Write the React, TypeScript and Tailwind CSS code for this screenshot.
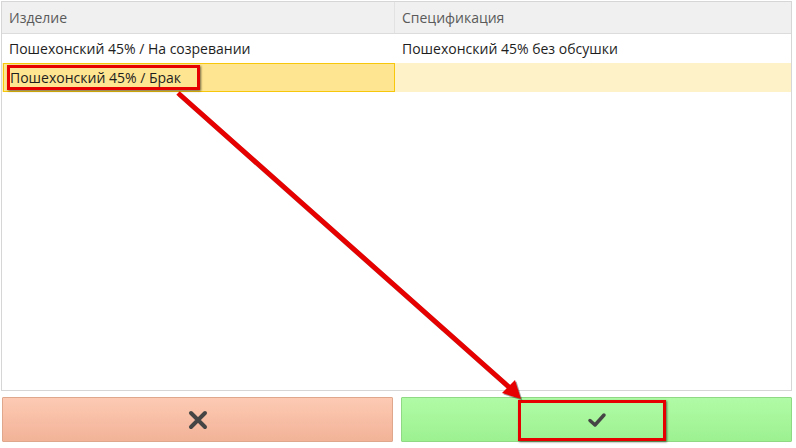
import React from "react";

const rows = [
  { product: "Пошехонский 45% / На созревании", spec: "Пошехонский 45% без обсушки" },
  { product: "Пошехонский 45% / Брак", spec: "" },
];

export default function App() {
  return (
    <div className="relative w-[796px] h-[448px] bg-white font-['Open_Sans',sans-serif] text-[14px] flex flex-col">
      <div className="ml-[1px] mt-[1px] w-[791px] h-[390px] border border-[#d6d6d6] flex flex-col">
        <div className="grid grid-cols-[393px_1fr] h-[32px] bg-[#f0f0f0] border-b border-[#dcdcdc] text-[#5a5a5a]">
          <div className="flex items-center pl-[7px] border-r border-[#e2e2e2]">Изделие</div>
          <div className="flex items-center pl-[7px]">Спецификация</div>
        </div>
        <div className="grid grid-cols-[393px_1fr] h-[29px] text-[#1e1e1e]">
          <div className="flex items-center pl-[7px]">{rows[0].product}</div>
          <div className="flex items-center pl-[7px]">{rows[0].spec}</div>
        </div>
        <div className="grid grid-cols-[393px_1fr] h-[29px] text-[#1e1e1e] bg-[#fef2c8]">
          <div className="flex items-center pl-[6px] ml-[1px] bg-[#fee591] border border-[#f6c70a]">
            {rows[1].product}
          </div>
          <div className="flex items-center pl-[7px]">{rows[1].spec}</div>
        </div>
      </div>

      <div className="mt-[6px] ml-[2px] flex gap-[8px]">
        <button className="w-[391px] h-[45px] flex items-center justify-center border border-[#dfa78c] bg-gradient-to-b from-[#fdcab3] to-[#f2b398] rounded-[1px]">
          <svg width="22" height="22" viewBox="0 0 22 22">
            <path d="M4 4 L18 18 M18 4 L4 18" stroke="#454545" strokeWidth="4" strokeLinecap="round" fill="none" />
          </svg>
        </button>
        <button className="w-[391px] h-[45px] flex items-center justify-center border border-[#8fd884] bg-gradient-to-b from-[#b0fba6] to-[#9df190] rounded-[1px]">
          <svg width="20" height="16" viewBox="0 0 20 16">
            <path d="M3 8.5 L8 13 L17 3" stroke="#454545" strokeWidth="3.5" strokeLinecap="round" strokeLinejoin="round" fill="none" />
          </svg>
        </button>
      </div>

      {/* annotations */}
      <div className="absolute left-[7px] top-[65px] w-[193px] h-[25px] border-[3px] border-[#e60000] shadow-[1px_1px_2px_rgba(0,0,0,0.55)]" />
      <div className="absolute left-[518px] top-[400px] w-[148px] h-[41px] border-[3px] border-[#e60000] shadow-[1px_1px_2px_rgba(0,0,0,0.55)]" />
      <svg className="absolute left-0 top-0 pointer-events-none" width="796" height="448">
        <g transform="translate(1.5 1.5)" opacity="0.35">
          <line x1="178" y1="93" x2="510" y2="388" stroke="#000" strokeWidth="5" />
          <polygon points="521,399 502,393 515,380" fill="#000" />
        </g>
        <line x1="178" y1="93" x2="510" y2="388" stroke="#e60000" strokeWidth="5" />
        <polygon points="521,399 502,393 515,380" fill="#e60000" />
      </svg>
    </div>
  );
}
